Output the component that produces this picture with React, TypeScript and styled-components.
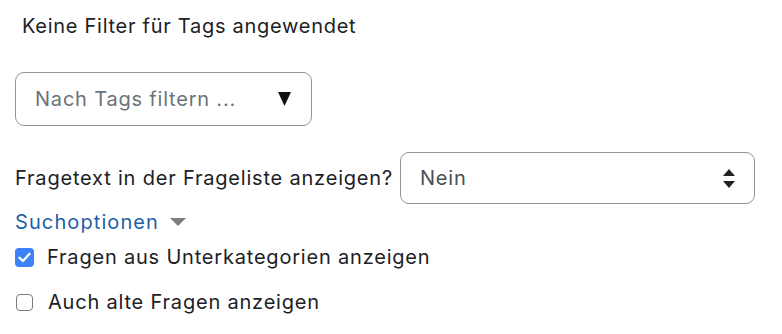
import styled, { createGlobalStyle } from "styled-components";

const GlobalStyle = createGlobalStyle`
    html, body {
        margin: 0;
        padding: 0;
        background: #ffffff;
    }
    body {
        font-family: Inter, "Noto Sans", "Liberation Sans", sans-serif;
        font-size: 20px;
        letter-spacing: 0.8px;
        color: #1d2125;
    }
`;

const Page = styled.div`
    display: flex;
    flex-direction: column;
    padding: 12px 0 0 15px;
`;

const Heading = styled.div`
    padding-left: 7px;
    line-height: 28px;
    letter-spacing: 0.72px;
    color: #1d2125;
`;

const TagFilter = styled.div`
    margin-top: 32px;
    width: 297px;
    height: 54px;
    box-sizing: border-box;
    border: 1px solid #8f959e;
    border-radius: 9px;
    display: flex;
    align-items: center;
    justify-content: space-between;
    padding: 0 20px 0 19px;
`;

const Placeholder = styled.span`
    color: #6a737b;
`;

const SelectRow = styled.div`
    margin-top: 26px;
    display: flex;
    align-items: center;
    gap: 7px;
`;

const Label = styled.span`
    color: #1d2125;
`;

const Select = styled.div`
    width: 355px;
    height: 52px;
    box-sizing: border-box;
    border: 1px solid #8f959e;
    border-radius: 9px;
    display: flex;
    align-items: center;
    justify-content: space-between;
    padding: 0 19px 0 19px;
    color: #495057;
`;

const Toggle = styled.div`
    margin-top: 4px;
    display: flex;
    align-items: center;
    gap: 11px;
    line-height: 28px;
    letter-spacing: 1.1px;
    color: #1f5fa8;
`;

const CheckRow = styled.label<{ $top: number }>`
    margin-top: ${props => props.$top}px;
    display: flex;
    align-items: center;
    gap: 13px;
    line-height: 28px;
    color: #1d2125;
`;

const Box = styled.span<{ $checked: boolean }>`
    flex: none;
    width: ${props => (props.$checked ? 19 : 17)}px;
    height: ${props => (props.$checked ? 19 : 17)}px;
    margin-left: ${props => (props.$checked ? 0 : 1)}px;
    margin-right: ${props => (props.$checked ? 0 : 2)}px;
    box-sizing: border-box;
    border-radius: 4px;
    background: ${props => (props.$checked ? "#3b82f6" : "#ffffff")};
    border: ${props => (props.$checked ? "none" : "1.5px solid #7a7a7a")};
    display: flex;
    align-items: center;
    justify-content: center;
`;

const App = () => {
    return (
        <Page>
            <GlobalStyle />
            <Heading>Keine Filter für Tags angewendet</Heading>
            <TagFilter>
                <Placeholder>Nach Tags filtern ...</Placeholder>
                <svg width="13" height="14" viewBox="0 0 13 14">
                    <path d="M0 0 H13 L6.5 14 Z" fill="#111" />
                </svg>
            </TagFilter>
            <SelectRow>
                <Label>Fragetext in der Frageliste anzeigen?</Label>
                <Select>
                    <span>Nein</span>
                    <svg width="12" height="19" viewBox="0 0 12 19">
                        <path d="M6 0 L12 7 H0 Z" fill="#222" />
                        <path d="M0 12 H12 L6 19 Z" fill="#222" />
                    </svg>
                </Select>
            </SelectRow>
            <Toggle>
                Suchoptionen
                <svg width="16" height="8" viewBox="0 0 16 8">
                    <path d="M0 0 H16 L8 8 Z" fill="#7d7d7d" />
                </svg>
            </Toggle>
            <CheckRow $top={7}>
                <Box $checked={true}>
                    <svg width="13" height="11" viewBox="0 0 13 11">
                        <path d="M1.5 5.8 L5 9 L11.5 1.8" stroke="#fff" strokeWidth="2.3" fill="none" strokeLinecap="round" strokeLinejoin="round" />
                    </svg>
                </Box>
                Fragen aus Unterkategorien anzeigen
            </CheckRow>
            <CheckRow $top={17}>
                <Box $checked={false} />
                Auch alte Fragen anzeigen
            </CheckRow>
        </Page>
    );
};

export default App;
